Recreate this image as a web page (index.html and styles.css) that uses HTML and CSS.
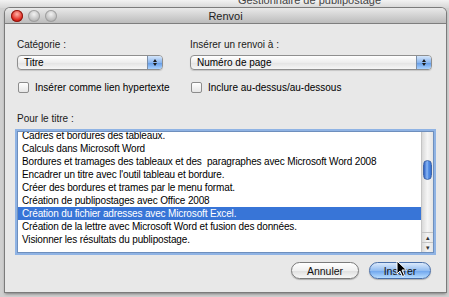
FILE: index.html
```html
<!DOCTYPE html>
<html lang="fr">
<head>
    <meta charset="UTF-8">
    <title>Renvoi</title>
    <link rel="stylesheet" href="styles.css">
</head>
<body>
    <div class="backdrop">
        <span class="backdrop-title">Gestionnaire de publipostage</span>
    </div>
    <div class="window">
        <div class="titlebar">
            <div class="lights">
                <span class="light red"></span>
                <span class="light"></span>
                <span class="light"></span>
            </div>
            <div class="title">Renvoi</div>
        </div>
        <div class="content">
            <div class="fields">
                <div class="field">
                    <label>Catégorie :</label>
                    <div class="popup">
                        <span class="popup-value">Titre</span>
                        <span class="popup-arrows"><i class="up"></i><i class="down"></i></span>
                    </div>
                    <div class="check"><span class="box"></span>Insérer comme lien hypertexte</div>
                </div>
                <div class="field">
                    <label>Insérer un renvoi à :</label>
                    <div class="popup">
                        <span class="popup-value">Numéro de page</span>
                        <span class="popup-arrows"><i class="up"></i><i class="down"></i></span>
                    </div>
                    <div class="check"><span class="box"></span>Inclure au-dessus/au-dessous</div>
                </div>
            </div>
            <label class="list-label">Pour le titre :</label>
            <div class="list">
                <ul class="items">
                    <li>Cadres et bordures des tableaux.</li>
                    <li>Calculs dans Microsoft Word</li>
                    <li>Bordures et tramages des tableaux et des &nbsp;paragraphes avec Microsoft Word 2008</li>
                    <li>Encadrer un titre avec l'outil tableau et bordure.</li>
                    <li>Créer des bordures et trames par le menu format.</li>
                    <li>Création de publipostages avec Office 2008</li>
                    <li class="selected">Création du fichier adresses avec Microsoft Excel.</li>
                    <li>Création de la lettre avec Microsoft Word et fusion des données.</li>
                    <li>Visionner les résultats du publipostage.</li>
                </ul>
                <div class="scrollbar">
                    <div class="track">
                        <div class="thumb"></div>
                    </div>
                    <div class="arrow">&#9652;</div>
                    <div class="arrow">&#9662;</div>
                </div>
            </div>
            <div class="buttons">
                <button class="btn">Annuler</button>
                <button class="btn default">Insérer</button>
            </div>
        </div>
        <svg class="cursor" width="12" height="18" viewBox="0 0 12 18">
            <path d="M1 1 L1 14 L4 11 L6.5 16.5 L8.5 15.5 L6 10 L10.5 10 Z" fill="#000" stroke="#fff" stroke-width="1"/>
        </svg>
    </div>
</body>
</html>
```

FILE: styles.css
```css
* {
    margin: 0;
    padding: 0;
    box-sizing: border-box;
}

body {
    width: 449px;
    height: 297px;
    overflow: hidden;
    background: #cfcfcf;
    font-family: "Liberation Sans", Arial, sans-serif;
    font-size: 10px;
    color: #000;
}

.backdrop {
    height: 8px;
    background: linear-gradient(#f2f2f2, #d6d6d6);
    overflow: hidden;
    text-align: center;
    padding-left: 170px;
}

.backdrop-title {
    display: block;
    font-size: 11px;
    line-height: 11px;
    margin-top: -5px;
    color: #444;
}

.window {
    position: relative;
    margin-left: 5px;
    width: 441px;
    height: 284px;
    background: #e8e8e8;
    border-radius: 5px 5px 0 0;
    box-shadow: 0 0 0 1px #7b7b7b, 0 2px 3px rgba(0, 0, 0, 0.4);
    overflow: hidden;
}

.titlebar {
    height: 16px;
    display: flex;
    align-items: center;
    background: linear-gradient(#e9e9e9, #bcbcbc);
    border-bottom: 1px solid #7e7e7e;
}

.lights {
    display: flex;
    gap: 5px;
    padding-left: 6px;
}

.light {
    width: 12px;
    height: 12px;
    border-radius: 50%;
    background: radial-gradient(circle at 50% 35%, #f2f2f2, #b4b4b4 70%, #9a9a9a);
    box-shadow: inset 0 0 0 1px #a0a0a0;
}

.light.red {
    background: radial-gradient(circle at 50% 35%, #ffb3a8, #e0241a 60%, #a10c06);
    box-shadow: inset 0 0 0 1px #8c1a12;
}

.title {
    flex: 1;
    text-align: center;
    font-size: 11px;
    color: #222;
    padding-right: 52px;
}

.content {
    padding: 14px 14px 0 12px;
}

.fields {
    display: grid;
    grid-template-columns: 146px 242px;
    column-gap: 27px;
}

label {
    display: block;
    height: 14px;
    line-height: 14px;
    font-size: 10px;
    color: #1a1a1a;
}

.popup {
    margin-top: 3px;
    height: 15px;
    display: flex;
    border: 1px solid #8f8f8f;
    border-radius: 4px;
    background: linear-gradient(#ffffff, #ededed 50%, #e2e2e2 50%, #f6f6f6);
    box-shadow: 0 1px 1px rgba(0, 0, 0, 0.15);
    overflow: hidden;
}

.popup-value {
    flex: 1;
    line-height: 13px;
    padding-left: 6px;
    font-size: 10px;
}

.popup-arrows {
    width: 15px;
    border-left: 1px solid #7a8ea8;
    background: linear-gradient(#d5e6fb, #8ab6ee 50%, #5f97e4 50%, #a9d2ff);
    display: flex;
    flex-direction: column;
    align-items: center;
    justify-content: center;
    gap: 1px;
}

.popup-arrows i {
    width: 0;
    height: 0;
    border-left: 2.5px solid transparent;
    border-right: 2.5px solid transparent;
}

.popup-arrows .up {
    border-bottom: 3px solid #1a1a1a;
}

.popup-arrows .down {
    border-top: 3px solid #1a1a1a;
}

.check {
    display: flex;
    align-items: center;
    margin-top: 10px;
    margin-left: 1px;
    height: 14px;
    font-size: 10px;
    white-space: nowrap;
}

.box {
    flex-shrink: 0;
    width: 11px;
    height: 11px;
    border: 1px solid #8c8c8c;
    border-radius: 2px;
    background: linear-gradient(#ffffff, #e6e6e6);
    margin-right: 6px;
}

.list-label {
    margin-top: 18px;
}

.list {
    margin-top: 5px;
    height: 122px;
    width: 417px;
    display: flex;
    background: #fff;
    border: 1px solid #6e8fbd;
    box-shadow: 0 0 0 2px #8fb3e4;
    overflow: hidden;
}

.items {
    flex: 1;
    list-style: none;
    margin-top: -3px;
}

.items li {
    height: 13px;
    line-height: 13px;
    padding-left: 4px;
    white-space: nowrap;
    font-size: 10px;
    letter-spacing: -0.15px;
}

.items li.selected {
    background: #3875d7;
    color: #fff;
}

.scrollbar {
    width: 12px;
    display: flex;
    flex-direction: column;
    border-left: 1px solid #c4c4c4;
    background: linear-gradient(90deg, #d9d9d9, #f5f5f5 50%, #e4e4e4);
}

.track {
    flex: 1;
    padding-top: 28px;
}

.thumb {
    height: 20px;
    margin: 0 1px;
    border-radius: 5px;
    background: linear-gradient(90deg, #2f62c4, #8cb8f5 45%, #5a93e8 60%, #3670cf);
    border: 1px solid #4166a8;
}

.arrow {
    height: 10px;
    line-height: 10px;
    text-align: center;
    font-size: 7px;
    color: #333;
    border-top: 1px solid #c4c4c4;
}

.buttons {
    display: flex;
    justify-content: flex-end;
    gap: 10px;
    margin-top: 9px;
    padding-right: 1px;
}

.btn {
    font-family: "Liberation Sans", Arial, sans-serif;
    font-size: 10.5px;
    height: 17px;
    border-radius: 9px;
    border: 1px solid #7b7b7b;
    background: linear-gradient(#ffffff, #f0f0f0 50%, #dedede 50%, #f7f7f7);
    box-shadow: 0 1px 1px rgba(0, 0, 0, 0.25);
    color: #111;
    width: 68px;
}

.btn.default {
    width: 62px;
    border-color: #4a6fa8;
    background: linear-gradient(#dbe9fb, #93bdf1 50%, #6aa2ec 50%, #b6dcff);
}

.cursor {
    position: absolute;
    left: 391px;
    top: 252px;
}
```
